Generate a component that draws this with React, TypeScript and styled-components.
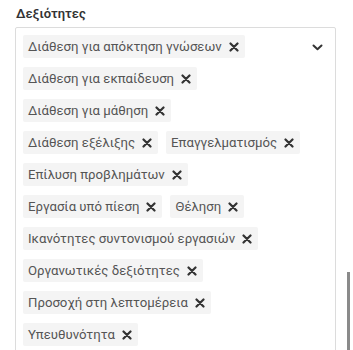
import React from "react";
import styled, { createGlobalStyle } from "styled-components";

const GlobalStyle = createGlobalStyle`
  html, body {
    margin: 0;
    padding: 0;
    overflow: hidden;
    background: #fff;
    font-family: Roboto, "Noto Sans", "DejaVu Sans", sans-serif;
  }
`;

const Field = styled.div`
  padding: 6px 17px 0 15px;
`;

const Label = styled.div`
  font-size: 13px;
  font-weight: 600;
  color: #333;
  padding-left: 1px;
  line-height: 16px;
  margin-bottom: 5px;
`;

const Control = styled.div`
  display: flex;
  align-items: flex-start;
  border: 1px solid #dcdcdc;
  border-radius: 2px;
  min-height: 340px;
`;

const Values = styled.div`
  flex: 1;
  display: flex;
  flex-wrap: wrap;
  align-content: flex-start;
  gap: 9px 8px;
  padding: 7px 0 7px 7px;
`;

const Chip = styled.div`
  display: inline-flex;
  align-items: center;
  height: 23px;
  padding: 0 6px 0 5px;
  background: #f4f4f4;
  border-radius: 2px;
  font-size: 13.2px;
  color: #555;
  white-space: nowrap;
`;

const Remove = styled.span`
  display: inline-flex;
  margin-left: 7px;
  color: #333;
`;

const Indicator = styled.div`
  width: 22px;
  display: flex;
  justify-content: center;
  padding: 16px 7px 0 0;
  color: #333;
`;

const Thumb = styled.div`
  position: fixed;
  right: 3px;
  top: 272px;
  bottom: 0;
  width: 3px;
  background: #8a8a8a;
`;

const skills = [
  "Διάθεση για απόκτηση γνώσεων",
  "Διάθεση για εκπαίδευση",
  "Διάθεση για μάθηση",
  "Διάθεση εξέλιξης",
  "Επαγγελματισμός",
  "Επίλυση προβλημάτων",
  "Εργασία υπό πίεση",
  "Θέληση",
  "Ικανότητες συντονισμού εργασιών",
  "Οργανωτικές δεξιότητες",
  "Προσοχή στη λεπτομέρεια",
  "Υπευθυνότητα",
];

const Cross = () => (
  <svg width="10" height="10" viewBox="0 0 10 10">
    <path d="M1.5 1.5 L8.5 8.5 M8.5 1.5 L1.5 8.5" stroke="currentColor" strokeWidth="2.2" strokeLinecap="round" />
  </svg>
);

const Chevron = () => (
  <svg width="11" height="7" viewBox="0 0 11 7">
    <path d="M1.5 1.5 L5.5 5.2 L9.5 1.5" stroke="currentColor" strokeWidth="2" fill="none" strokeLinecap="round" strokeLinejoin="round" />
  </svg>
);

const App = () => {
  return (
    <>
      <GlobalStyle />
      <Field>
        <Label>Δεξιότητες</Label>
        <Control>
          <Values>
            {skills.map((s) => (
              <Chip key={s}>
                {s}
                <Remove>
                  <Cross />
                </Remove>
              </Chip>
            ))}
          </Values>
          <Indicator>
            <Chevron />
          </Indicator>
        </Control>
      </Field>
      <Thumb />
    </>
  );
};

export default App;
